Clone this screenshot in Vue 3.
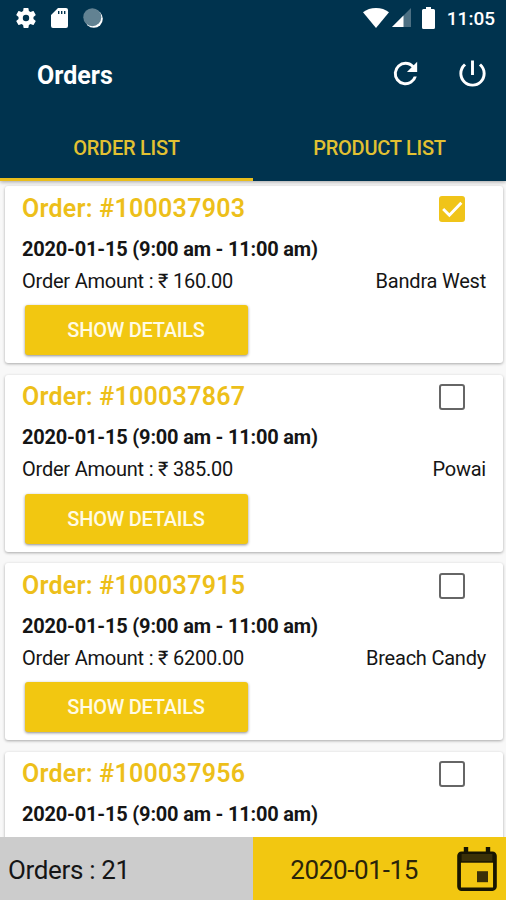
<script setup>
import { ref } from 'vue'

const orders = ref([
  { id: '100037903', amount: '160.00', area: 'Bandra West', checked: true },
  { id: '100037867', amount: '385.00', area: 'Powai', checked: false },
  { id: '100037915', amount: '6200.00', area: 'Breach Candy', checked: false },
  { id: '100037956', checked: false },
])
</script>

<template>
  <div class="screen">
    <header class="header">
      <div class="status">
        <svg class="gear" viewBox="2 2 20 20"><path d="M19.43 12.98c.04-.32.07-.64.07-.98s-.03-.66-.07-.98l2.11-1.65c.19-.15.24-.42.12-.64l-2-3.46c-.12-.22-.39-.3-.61-.22l-2.49 1c-.52-.4-1.08-.73-1.69-.98l-.38-2.65A.49.49 0 0 0 14 2h-4c-.25 0-.46.18-.49.42l-.38 2.65c-.61.25-1.17.59-1.69.98l-2.49-1c-.23-.09-.49 0-.61.22l-2 3.46c-.13.22-.07.49.12.64l2.11 1.65c-.04.32-.07.65-.07.98s.03.66.07.98l-2.11 1.65c-.19.15-.24.42-.12.64l2 3.46c.12.22.39.3.61.22l2.49-1c.52.4 1.08.73 1.69.98l.38 2.65c.03.24.24.42.49.42h4c.25 0 .46-.18.49-.42l.38-2.65c.61-.25 1.17-.59 1.69-.98l2.49 1c.23.09.49 0 .61-.22l2-3.46c.12-.22.07-.49-.12-.64l-2.11-1.65zM12 15.2a3.200 3.200 0 1 1 0-6.400 3.200 3.200 0 0 1 0 6.400z" /></svg>
        <svg class="sd" viewBox="0 0 17 20"><path d="M7 0h8q2 0 2 2v16q0 2-2 2H2q-2 0-2-2V7zM7 3v3h1.400V3zm3 0v3h1.400V3zm3 0v3h1.400V3z" fill-rule="evenodd" /></svg>
        <svg class="moon" viewBox="0 0 20 20"><circle cx="10.800" cy="10.800" r="9" /><circle class="disc" cx="9.300" cy="9.200" r="9" /></svg>
        <span class="spacer"></span>
        <svg class="wifi" viewBox="0 0 26 20"><path d="M13 20 0 4.300C3.500 1.500 8 0 13 0s9.500 1.500 13 4.300z" /></svg>
        <svg class="signal" viewBox="0 0 19 19"><path class="faint" d="M0 19 19 0v19z" /><path d="M0 19 11.500 7.500V19z" /></svg>
        <svg class="battery" viewBox="0 0 13 22"><path d="M4 0h5v2h2.500Q13 2 13 3.500v17q0 1.500-1.500 1.500h-10Q0 22 0 20.500v-17Q0 2 1.500 2H4z" /></svg>
        <span class="time">11:05</span>
      </div>
      <div class="bar">
        <h1 class="heading">Orders</h1>
        <svg class="action" viewBox="0 0 24 24"><path d="M17.650 6.350A7.958 7.958 0 0 0 12 4a8 8 0 1 0 7.730 10h-2.080A6 6 0 1 1 12 6c1.660 0 3.140.69 4.220 1.780L13 11h7V4l-2.350 2.350z" /></svg>
        <svg class="action" viewBox="0 0 24 24"><path d="M13 3h-2v10h2V3zm4.830 2.170-1.420 1.420A6.920 6.920 0 0 1 19 12a7 7 0 1 1-11.420-5.420L6.170 5.170A8.932 8.932 0 0 0 3 12a9 9 0 0 0 18 0c0-2.740-1.230-5.180-3.170-6.830z" /></svg>
      </div>
      <nav class="tabs">
        <div class="tab active"><span>ORDER LIST</span></div>
        <div class="tab"><span>PRODUCT LIST</span></div>
      </nav>
    </header>

    <main class="list">
      <article v-for="o in orders" :key="o.id" class="card">
        <div class="top">
          <h2 class="title">Order: #{{ o.id }}</h2>
          <button class="check" :class="{ on: o.checked }" @click="o.checked = !o.checked">
            <svg v-if="o.checked" viewBox="0 0 25 25"><path d="m4 12.500 6 6L21.500 6.500" /></svg>
          </button>
        </div>
        <p class="slot">2020-01-15 (9:00 am - 11:00 am)</p>
        <template v-if="o.amount">
          <div class="row">
            <span>Order Amount : ₹ {{ o.amount }}</span>
            <span>{{ o.area }}</span>
          </div>
          <button class="details">SHOW DETAILS</button>
        </template>
      </article>
    </main>

    <footer class="footer">
      <div class="count"><span>Orders : 21</span></div>
      <div class="date">
        <span class="day">2020-01-15</span>
        <svg class="calendar" viewBox="3 1 18 20"><path class="band" d="M4 4h16v4H4z" /><path d="M17 12h-5v5h5v-5z" class="band" /><path fill-rule="evenodd" d="M16 1v2H8V1H6v2H5c-1.110 0-1.990.9-1.990 2L3 19a2 2 0 0 0 2 2h14c1.100 0 2-.9 2-2V5c0-1.100-.9-2-2-2h-1V1h-2zM5 4.200h14V7.500H5zM19 19.400H4.700V8h14.600v11.400z" /></svg>
      </div>
    </footer>
  </div>
</template>

<style>
body { margin: 0; }
</style>

<style scoped>
.screen {
  width: 506px;
  height: 900px;
  display: flex;
  flex-direction: column;
  overflow: hidden;
  background: #f8f8f8;
  font-family: Roboto, "Noto Sans", sans-serif;
  color: #151515;
}
h1, h2, p { margin: 0; }
svg { display: block; flex: none; }
button { border: 0; padding: 0; font-family: inherit; }

.header {
  flex: none;
  height: 180.500px;
  display: flex;
  flex-direction: column;
  background: #00334e;
  box-shadow: 0 1px 4px rgba(0, 0, 0, .35);
  z-index: 1;
}
.status {
  height: 35px;
  box-sizing: border-box;
  display: flex;
  align-items: center;
  padding: 0 11px 0 16px;
  fill: #fff;
}
.gear { width: 20px; height: 20px; }
.sd { width: 17px; height: 20px; margin-left: 15px; }
.moon { width: 20px; height: 20px; margin-left: 15px; }
.moon .disc { fill: #628292; }
.spacer { flex: 1; }
.wifi { width: 26px; height: 20px; }
.signal { width: 19px; height: 19px; margin-left: 3px; }
.signal .faint { fill: #4d7083; }
.battery { width: 13px; height: 22px; margin: 0 12px 0 11px; }
.time { color: #fff; font-size: 19px; font-weight: 500; line-height: 35px; padding-top: 2px; }

.bar {
  height: 80px;
  box-sizing: border-box;
  display: flex;
  align-items: center;
  gap: 32px;
  padding: 0 16px 3px 37px;
  fill: #fff;
}
.heading { flex: 1; color: #fff; font-size: 25px; font-weight: 700; padding-top: 3px; }
.action { width: 35px; height: 35px; }

.tabs { flex: 1; display: flex; }
.tab {
  width: 50%;
  box-sizing: border-box;
  display: flex;
  align-items: center;
  justify-content: center;
  padding-top: 3px;
  border-bottom: 3px solid transparent;
  color: #e2c132;
  font-size: 20px;
  font-weight: 500;
  letter-spacing: -.25px;
}
.tab.active { border-bottom-color: #e9bd1c; }

.list {
  flex: 1;
  min-height: 0;
  overflow: hidden;
  display: flex;
  flex-direction: column;
  gap: 11.500px;
  padding: 5.500px 3px 0 5px;
}
.card {
  flex: none;
  height: 177px;
  box-sizing: border-box;
  padding: 6px 17px 0;
  background: #fff;
  border-radius: 3px;
  box-shadow: 0 1px 3px rgba(0, 0, 0, .32);
}
.top { display: flex; justify-content: space-between; align-items: center; height: 32px; }
.title { color: #edbf1a; font-size: 25px; font-weight: 600; line-height: 32px; letter-spacing: .25px; padding-top: 1px; }
.check {
  width: 26px;
  height: 26px;
  box-sizing: border-box;
  margin: 1px 21px 0 0;
  border: 2px solid #666;
  border-radius: 3px;
  background: #fff;
}
.check.on { border: 0; background: #f0c419; }
.check svg { width: 26px; height: 26px; fill: none; stroke: #fff; stroke-width: 2.800; }
.slot { margin-top: 12.500px; font-size: 20px; font-weight: 700; line-height: 24px; letter-spacing: -.2px; }
.row { display: flex; justify-content: space-between; margin-top: 8px; font-size: 20px; line-height: 24px; letter-spacing: -.22px; }
.details {
  display: block;
  width: 223px;
  height: 50px;
  margin: 12.500px 0 0 2.500px;
  border-radius: 3px;
  background: #f2c711;
  color: #fffbe5;
  font-size: 20px;
  font-weight: 500;
  letter-spacing: -.25px;
  box-shadow: 0 1px 3px rgba(0, 0, 0, .45);
}

.footer { flex: none; height: 63px; display: flex; z-index: 1; }
.count { width: 253px; box-sizing: border-box; padding: 3px 0 0 8px; display: flex; align-items: center; background: #ccc; font-size: 26px; letter-spacing: -.35px; }
.date { flex: 1; display: flex; align-items: center; justify-content: flex-end; padding-right: 9px; background: #f2c711; font-size: 26px; letter-spacing: -.35px; color: #2a240a; }
.day { margin-right: 39px; padding-top: 3px; }
.calendar { width: 40px; height: 44px; fill: #171501; }
.calendar .band { fill: #3a3008; }
</style>
